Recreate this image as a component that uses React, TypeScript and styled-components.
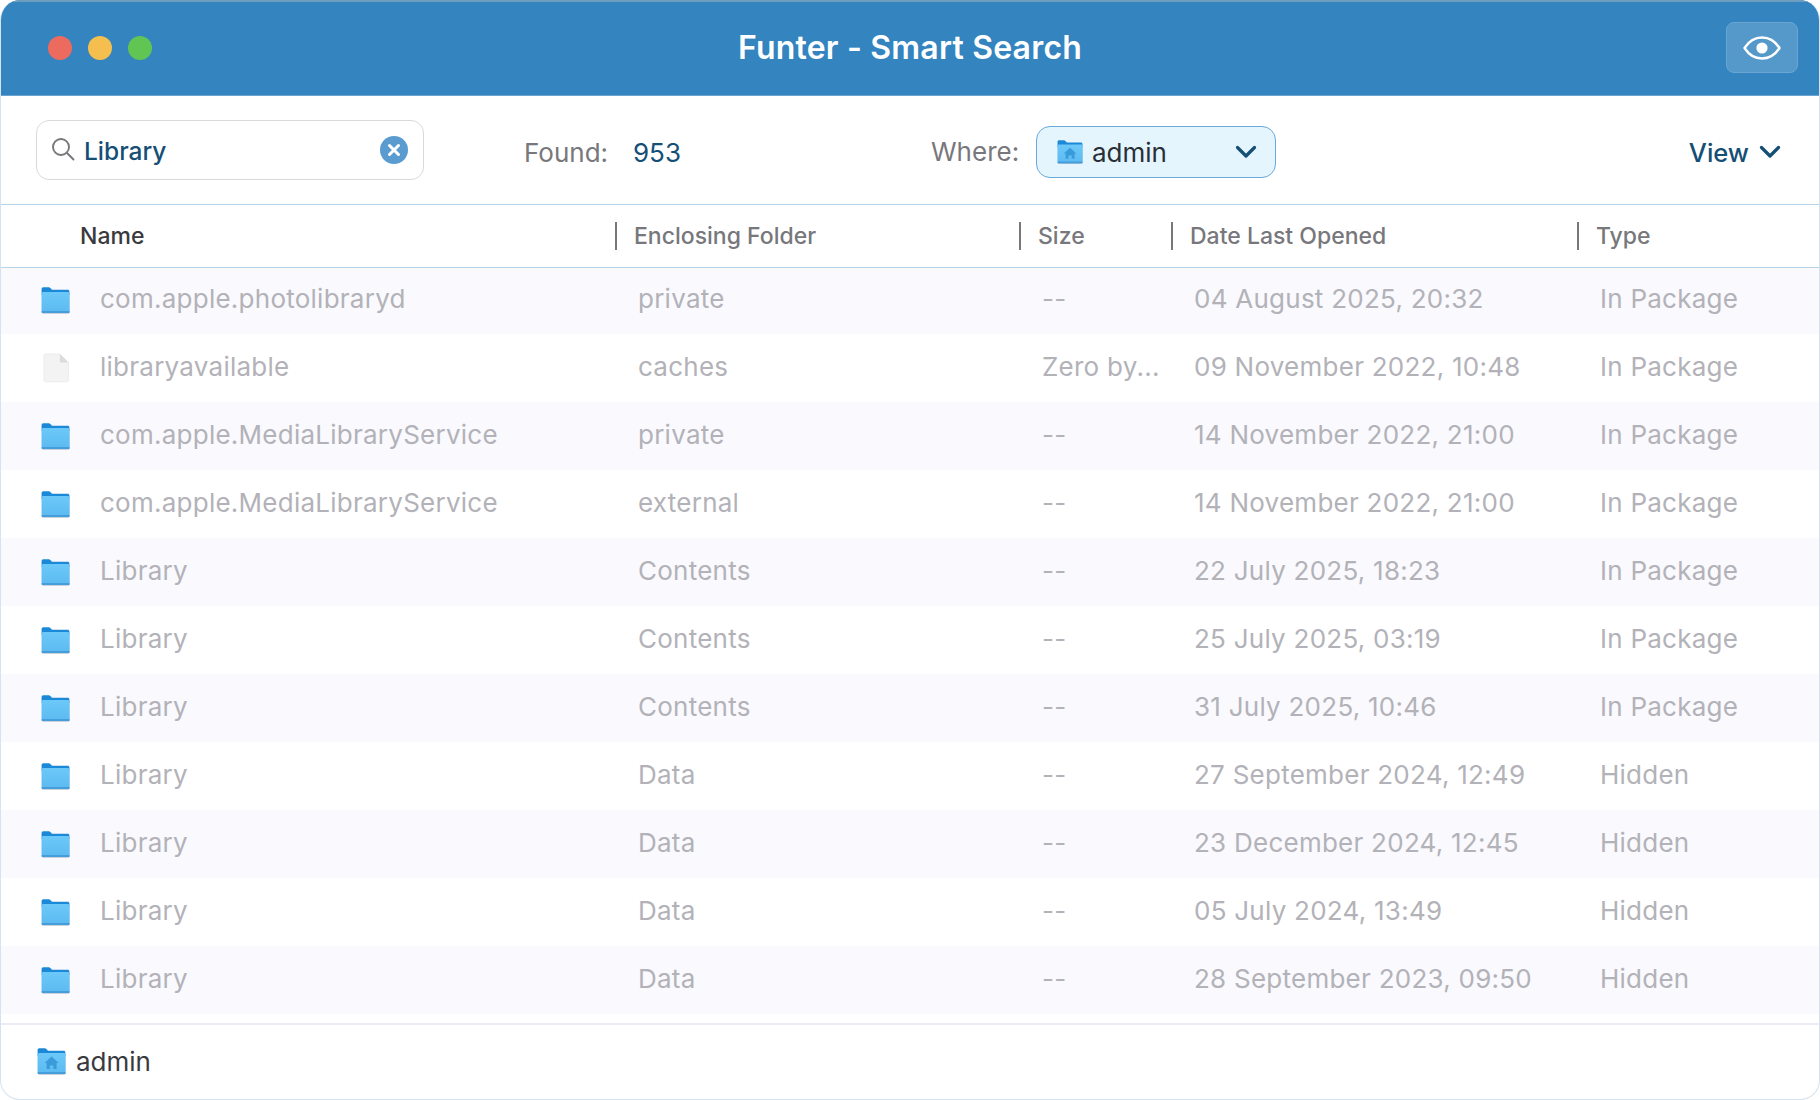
import React from "react";
import styled, { createGlobalStyle } from "styled-components";

const Global = createGlobalStyle`
  html, body { margin: 0; padding: 0; background: #fff; }
  body { font-family: Inter, "Liberation Sans", sans-serif; -webkit-font-smoothing: antialiased; }
  * { box-sizing: border-box; }
`;

const Window = styled.div`
  width: 1820px;
  height: 1100px;
  border-radius: 20px;
  overflow: hidden;
  display: flex;
  flex-direction: column;
  background: #fff;
  border: 1px solid #d5e3ee;
  border-top: 0;
`;

const TitleBar = styled.header`
  height: 96px;
  margin: 0 -1px;
  flex: none;
  display: grid;
  grid-template-columns: 1fr auto 1fr;
  align-items: center;
  padding: 0 22px 2px;
  background: #3384bf;
  border-top: 2px solid #6f9dbf;
  border-bottom: 1px solid #6ba4d0;
`;

const Lights = styled.div`
  display: flex;
  gap: 16px;
  margin-left: 26px;
`;

const Light = styled.span<{ $c: string }>`
  width: 24px;
  height: 24px;
  border-radius: 50%;
  background: ${(p) => p.$c};
`;

const Title = styled.h1`
  margin: 0;
  color: #fff;
  font-size: 32px;
  font-weight: 600;
  letter-spacing: 0.2px;
`;

const EyeButton = styled.button`
  justify-self: end;
  width: 72px;
  height: 51px;
  padding: 0;
  display: flex;
  align-items: center;
  justify-content: center;
  border-radius: 8px;
  background: #5599cb;
  border: 1px solid #6aa6d3;
`;

const Toolbar = styled.div`
  height: 108px;
  flex: none;
  display: flex;
  align-items: center;
  padding: 4px 0 0 35px;
  font-size: 26px;
`;

const SearchBox = styled.div`
  width: 388px;
  height: 60px;
  display: flex;
  align-items: center;
  padding: 0 15px 0 14px;
  gap: 9px;
  border: 1px solid #d9d9dc;
  border-radius: 13px;
  color: #164f75;
  font-size: 24.5px;
  font-weight: 500;
  margin-top: -4px;
  margin-right: 1px;
`;

const SearchIconSlot = styled.span`
  display: flex;
  margin-bottom: 2px;
`;

const SearchText = styled.span`
  flex: 1;
  margin-top: 2px;
`;

const FoundLabel = styled.span`
  margin-left: 99px;
  color: #77777c;
  width: 109px;
`;

const FoundCount = styled.span`
  color: #164f75;
  width: 298px;
`;

const WhereLabel = styled.span`
  color: #77777c;
  width: 105px;
  margin-top: -2px;
`;

const Select = styled.div`
  width: 240px;
  height: 52px;
  display: flex;
  align-items: center;
  padding: 0 18px 0 20px;
  background: #e4f5fe;
  border: 1px solid #6ba9d9;
  border-radius: 14px;
  color: #2a2f36;
  gap: 9px;
`;

const SelectText = styled.span`
  flex: 1;
`;

const ViewMenu = styled.div`
  margin-left: auto;
  margin-right: 38px;
  display: flex;
  align-items: center;
  gap: 10px;
  color: #164f75;
  font-size: 25.5px;
  font-weight: 500;
`;

const TableHead = styled.div`
  height: 64px;
  flex: none;
  margin: 0 -1px;
  display: grid;
  grid-template-columns: 614px 404px 152px 406px 1fr;
  align-items: center;
  border: 1px solid #b7d3ea;
  font-size: 23px;
  font-weight: 450;
  color: #77777c;
  position: relative;
  z-index: 1;
  background: #fff;
`;

const HeadCell = styled.div<{ $first?: boolean }>`
  height: 28px;
  display: flex;
  align-items: center;
  color: ${(p) => (p.$first ? "#3a3a3e" : "#77777c")};
  padding-left: ${(p) => (p.$first ? "79px" : "17px")};
  border-left: ${(p) => (p.$first ? "0" : "2px solid #77777c")};
`;

const Rows = styled.div`
  margin: -2px -1px 0;
  flex: none;
`;

const Row = styled.div<{ $odd: boolean }>`
  height: 68px;
  display: grid;
  grid-template-columns: 100px 538px 404px 152px 406px 1fr;
  align-items: center;
  background: ${(p) => (p.$odd ? "#f9f9fe" : "#fff")};
  color: #b2b2b8;
  font-size: 26px;
  letter-spacing: 0.25px;
`;

const IconCell = styled.div`
  padding-left: 41px;
  display: flex;
  align-items: center;
`;

const Cell = styled.div`
  white-space: nowrap;
  margin-bottom: 4px;
`;

const Footer = styled.footer`
  margin: 9px -1px 0;
  flex: 1;
  display: flex;
  align-items: center;
  gap: 10px;
  padding: 0 0 2px 37px;
  border-top: 2px solid #ecebf8;
  color: #3a3a3e;
  font-size: 26px;
`;

const FolderGlyph = ({ home, w = 29 }: { home?: boolean; w?: number }) => {
  const id = home ? "fh" : "fp";
  return (
    <svg width={w} height={(w * 27) / 29} viewBox="0 0 29 27">
      <defs>
        <linearGradient id={id} x1="0" y1="0" x2="0" y2="1">
          <stop offset="0" stopColor="#6cc8f8" />
          <stop offset="1" stopColor="#5cbaf1" />
        </linearGradient>
      </defs>
      <rect x=".8" y="6" width="27.6" height="20.8" rx="1.6" fill="#b9c4cf" />
      <path d="M.6 2C.6 1 1.4.3 2.3.3h5.4c.7 0 1.2.3 1.7.8l1.6 1.6h15.7c.9 0 1.7.7 1.7 1.6V8H.6z" fill="#1c88d8" />
      <rect x=".6" y="5" width="28" height="21" rx="1.6" fill={`url(#${id})`} />
      <rect x=".6" y="24" width="28" height="2" rx="1" fill="#459ddb" />
      {home && <path d="M14.6 8.6 7.5 15h2.1v6h3.2v-3.6h3.6V21h3.2v-6h2.1z" fill="#3a9bdb" />}
    </svg>
  );
};

const FileSlot = styled.span`
  margin-left: 2px;
  display: flex;
`;

const FileGlyph = () => (
  <FileSlot>
    <svg width="26" height="30" viewBox="0 0 26 29">
      <path d="M1 2.2C1 1.2 1.8.5 2.6.5h14.2L25.5 9v17.6c0 1-.8 1.7-1.7 1.7H2.7c-1 0-1.7-.7-1.7-1.7z" fill="#f3f3f4" stroke="#e6e6e8" strokeWidth=".7" />
      <path d="M16.8.5V7.4c0 .9.7 1.6 1.6 1.6h7.1z" fill="#dcdcdf" />
    </svg>
  </FileSlot>
);

const Chevron = () => (
  <svg width="22" height="14" viewBox="0 0 22 14" fill="none">
    <path d="M2.5 2.5 11 11l8.5-8.5" stroke="#164f75" strokeWidth="3.2" strokeLinecap="round" strokeLinejoin="round" />
  </svg>
);

const SearchGlyph = () => (
  <SearchIconSlot>
    <svg width="24" height="24" viewBox="0 0 24 24" fill="none" stroke="#77777c" strokeWidth="1.9" strokeLinecap="round">
      <circle cx="10" cy="10" r="8" />
      <path d="m16 16 6.5 6.5" />
    </svg>
  </SearchIconSlot>
);

const ClearGlyph = () => (
  <svg width="28" height="28" viewBox="0 0 28 28">
    <circle cx="14" cy="14" r="14" fill="#5a9ccf" />
    <path d="m9.5 9.5 9 9m0-9-9 9" stroke="#fff" strokeWidth="3" strokeLinecap="round" />
  </svg>
);

const EyeGlyph = () => (
  <svg width="38" height="24" viewBox="0 0 38 24" fill="none">
    <path d="M1.5 12C6 5 12 1.5 19 1.5S32 5 36.5 12C32 19 26 22.5 19 22.5S6 19 1.5 12z" stroke="#fff" strokeWidth="2.4" strokeLinejoin="round" />
    <circle cx="19" cy="12" r="5.6" fill="#fff" />
  </svg>
);

type Item = { n: string; f: string; s: string; d: string; t: string; file?: boolean };

const items: Item[] = [
  { n: "com.apple.photolibraryd", f: "private", s: "--", d: "04 August 2025, 20:32", t: "In Package" },
  { n: "libraryavailable", f: "caches", s: "Zero by...", d: "09 November 2022, 10:48", t: "In Package", file: true },
  { n: "com.apple.MediaLibraryService", f: "private", s: "--", d: "14 November 2022, 21:00", t: "In Package" },
  { n: "com.apple.MediaLibraryService", f: "external", s: "--", d: "14 November 2022, 21:00", t: "In Package" },
  { n: "Library", f: "Contents", s: "--", d: "22 July 2025, 18:23", t: "In Package" },
  { n: "Library", f: "Contents", s: "--", d: "25 July 2025, 03:19", t: "In Package" },
  { n: "Library", f: "Contents", s: "--", d: "31 July 2025, 10:46", t: "In Package" },
  { n: "Library", f: "Data", s: "--", d: "27 September 2024, 12:49", t: "Hidden" },
  { n: "Library", f: "Data", s: "--", d: "23 December 2024, 12:45", t: "Hidden" },
  { n: "Library", f: "Data", s: "--", d: "05 July 2024, 13:49", t: "Hidden" },
  { n: "Library", f: "Data", s: "--", d: "28 September 2023, 09:50", t: "Hidden" },
];

export default function App() {
  return (
    <>
      <Global />
      <Window>
        <TitleBar>
          <Lights>
            <Light $c="#ec6a5e" />
            <Light $c="#f5bf4f" />
            <Light $c="#61c554" />
          </Lights>
          <Title>Funter - Smart Search</Title>
          <EyeButton aria-label="Preview">
            <EyeGlyph />
          </EyeButton>
        </TitleBar>
        <Toolbar>
          <SearchBox>
            <SearchGlyph />
            <SearchText>Library</SearchText>
            <ClearGlyph />
          </SearchBox>
          <FoundLabel>Found:</FoundLabel>
          <FoundCount>953</FoundCount>
          <WhereLabel>Where:</WhereLabel>
          <Select>
            <FolderGlyph home w={26} />
            <SelectText>admin</SelectText>
            <Chevron />
          </Select>
          <ViewMenu>
            View
            <Chevron />
          </ViewMenu>
        </Toolbar>
        <TableHead>
          <HeadCell $first>Name</HeadCell>
          <HeadCell>Enclosing Folder</HeadCell>
          <HeadCell>Size</HeadCell>
          <HeadCell>Date Last Opened</HeadCell>
          <HeadCell>Type</HeadCell>
        </TableHead>
        <Rows>
          {items.map((it, i) => (
            <Row key={i} $odd={i % 2 === 0}>
              <IconCell>{it.file ? <FileGlyph /> : <FolderGlyph />}</IconCell>
              <Cell>{it.n}</Cell>
              <Cell>{it.f}</Cell>
              <Cell>{it.s}</Cell>
              <Cell>{it.d}</Cell>
              <Cell>{it.t}</Cell>
            </Row>
          ))}
        </Rows>
        <Footer>
          <FolderGlyph home />
          admin
        </Footer>
      </Window>
    </>
  );
}
